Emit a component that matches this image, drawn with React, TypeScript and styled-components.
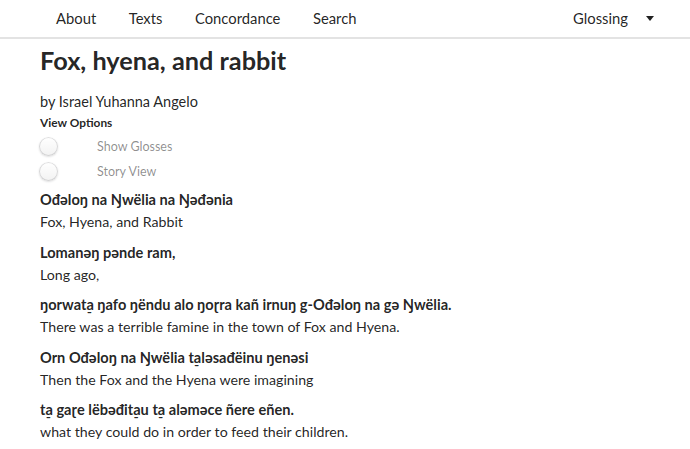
import * as React from "react";
import styled, { createGlobalStyle } from "styled-components";

const Global = createGlobalStyle`
  html, body {
    margin: 0;
    padding: 0;
    background: #fff;
  }
  body {
    font-family: Lato, "Noto Sans", "DejaVu Sans", sans-serif;
    color: rgba(0, 0, 0, 0.87);
    font-size: 14.2px;
  }
`;

const NavBar = styled.nav`
  display: flex;
  align-items: center;
  height: 35px;
  padding-bottom: 2px;
  box-sizing: content-box;
  border-bottom: 2px solid #e3e3e3;
  padding-left: 40px;
  padding-right: 36px;
`;

const NavItem = styled.a`
  padding: 0 16.5px 0 16px;
  font-size: 14.8px;
  color: rgba(0, 0, 0, 0.87);
  text-decoration: none;
  cursor: pointer;
`;

const Dropdown = styled.div`
  margin-left: auto;
  display: flex;
  align-items: center;
  gap: 18px;
  font-size: 14.8px;
`;

const Caret = styled.span`
  width: 0;
  height: 0;
  border-left: 4.5px solid transparent;
  border-right: 4.5px solid transparent;
  border-top: 5px solid rgba(0, 0, 0, 0.87);
  margin-top: 1px;
`;

const Main = styled.main`
  padding: 0 40px;
`;

const Title = styled.h1`
  margin: 5px 0 0;
  font-size: 25.3px;
  font-weight: 700;
  line-height: 32px;
  color: rgba(0, 0, 0, 0.87);
`;

const Byline = styled.div`
  margin-top: 16px;
  font-size: 14.5px;
  line-height: 20px;
`;

const OptionsLabel = styled.div`
  margin-top: 1px;
  font-size: 11.9px;
  font-weight: 700;
  line-height: 20px;
`;

const ToggleList = styled.div`
  display: flex;
  flex-direction: column;
  gap: 5px;
  margin-top: 3px;
`;

const ToggleRow = styled.label`
  display: flex;
  align-items: center;
  height: 20px;
  font-size: 12.5px;
  color: rgba(0, 0, 0, 0.45);
  cursor: pointer;
`;

const Knob = styled.span`
  width: 19px;
  height: 19px;
  box-sizing: border-box;
  border-radius: 50%;
  background: linear-gradient(transparent, rgba(0, 0, 0, 0.05)) #fff;
  box-shadow: 0 1px 2px 0 rgba(34, 36, 38, 0.15), 0 0 0 1px rgba(34, 36, 38, 0.15) inset;
  margin-left: -1px;
  margin-right: 39px;
  flex: none;
`;

const Lines = styled.div`
  margin-top: 8px;
  display: flex;
  flex-direction: column;
  gap: 8.5px;
`;

const Pair = styled.div`
  display: flex;
  flex-direction: column;
`;

const Source = styled.div`
  font-weight: 700;
  font-size: 14.6px;
  line-height: 22px;
`;

const Gloss = styled.div`
  font-size: 14.2px;
  line-height: 22px;
`;

const lines: [string, string][] = [
  ["Ođəloŋ na Ŋwëlia na Ŋəđənia", "Fox, Hyena, and Rabbit"],
  ["Lomanəŋ pənde ram,", "Long ago,"],
  [
    "ŋorwat̠a ŋafo ŋëndu alo ŋoɽra kañ irnuŋ g-Ođəloŋ na gə Ŋwëlia.",
    "There was a terrible famine in the town of Fox and Hyena.",
  ],
  ["Orn Ođəloŋ na Ŋwëlia t̠aləsađëinu ŋenəsi", "Then the Fox and the Hyena were imagining"],
  ["t̠a gaɽe lëbəđit̠au t̠a aləməce ñere eñen.", "what they could do in order to feed their children."],
];

export default function App() {
  return (
    <>
      <Global />
      <NavBar>
        <NavItem>About</NavItem>
        <NavItem>Texts</NavItem>
        <NavItem>Concordance</NavItem>
        <NavItem>Search</NavItem>
        <Dropdown>
          Glossing
          <Caret />
        </Dropdown>
      </NavBar>
      <Main>
        <Title>Fox, hyena, and rabbit</Title>
        <Byline>by Israel Yuhanna Angelo</Byline>
        <OptionsLabel>View Options</OptionsLabel>
        <ToggleList>
          <ToggleRow>
            <Knob />
            Show Glosses
          </ToggleRow>
          <ToggleRow>
            <Knob />
            Story View
          </ToggleRow>
        </ToggleList>
        <Lines>
          {lines.map(([src, gloss], i) => (
            <Pair key={i}>
              <Source>{src}</Source>
              <Gloss>{gloss}</Gloss>
            </Pair>
          ))}
        </Lines>
      </Main>
    </>
  );
}
